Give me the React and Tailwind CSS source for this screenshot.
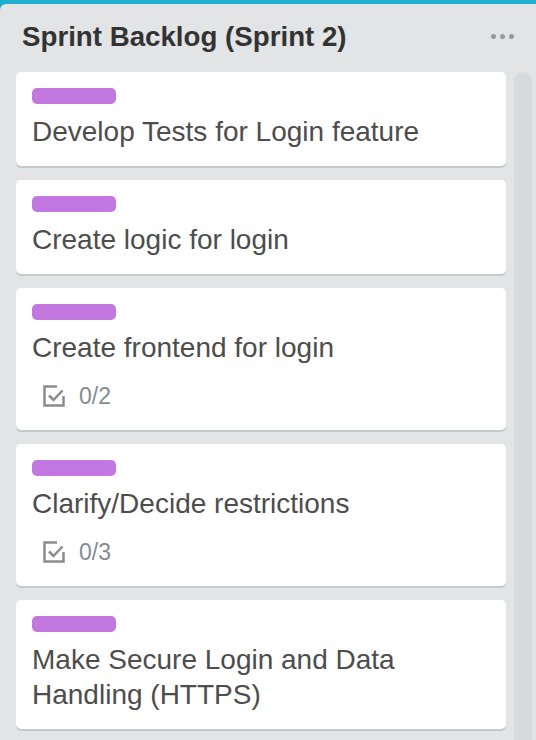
import React from "react";

const cards = [
  { title: "Develop Tests for Login feature" },
  { title: "Create logic for login" },
  { title: "Create frontend for login", checklist: "0/2" },
  { title: "Clarify/Decide restrictions", checklist: "0/3" },
  { title: "Make Secure Login and Data Handling (HTTPS)" },
];

function ChecklistIcon() {
  return (
    <svg width="22" height="22" viewBox="0 0 22 22" fill="none" stroke="#8c8c8c" strokeWidth="2.5">
      <path d="M14 1.5H1.5V20.5H20.5V11" />
      <path d="M6 10.5L10.5 15L19.5 5.5" />
    </svg>
  );
}

function Card({ title, checklist }) {
  return (
    <div className="bg-white rounded-[5px] shadow-[0_2px_0_#c4c9cc] px-4 pt-4 pb-[17px]">
      <div className="w-[84px] h-4 rounded-[5px] bg-[#c377e0]" />
      <div className="mt-[10px] text-[28px] leading-[35px] text-[#4d4d4d]">{title}</div>
      {checklist && (
        <div className="mt-[14px] h-[34px] flex items-center gap-[14px] pl-[11px] text-[23px] text-[#838c91]">
          <ChecklistIcon />
          <span>{checklist}</span>
        </div>
      )}
    </div>
  );
}

export default function App() {
  return (
    <div className="w-[536px] h-[740px] overflow-hidden bg-[#1fafcf] pt-1 font-['Liberation_Sans',Arial,sans-serif]">
      <div className="h-full bg-[#e2e4e6] rounded-tl-[6px] flex flex-col">
        {/* Header */}
        <div className="h-[68px] flex items-center justify-between pl-[22px] pr-[22px] shrink-0">
          <h2 className="text-[27.7px] font-bold text-[#333] leading-none -mt-[3px]">Sprint Backlog (Sprint 2)</h2>
          <div className="flex gap-1 -mt-[3px]">
            <span className="w-[5px] h-[5px] rounded-full bg-[#999]" />
            <span className="w-[5px] h-[5px] rounded-full bg-[#999]" />
            <span className="w-[5px] h-[5px] rounded-full bg-[#999]" />
          </div>
        </div>

        {/* Body */}
        <div className="flex-1 flex gap-2 pl-4 pr-1 min-h-0">
          <div className="w-[490px] flex flex-col gap-[14px]">
            {cards.map((c) => (
              <Card key={c.title} {...c} />
            ))}
          </div>
          <div className="w-[18px] bg-[#d6dadc] rounded-t-[9px]" />
        </div>
      </div>
    </div>
  );
}
